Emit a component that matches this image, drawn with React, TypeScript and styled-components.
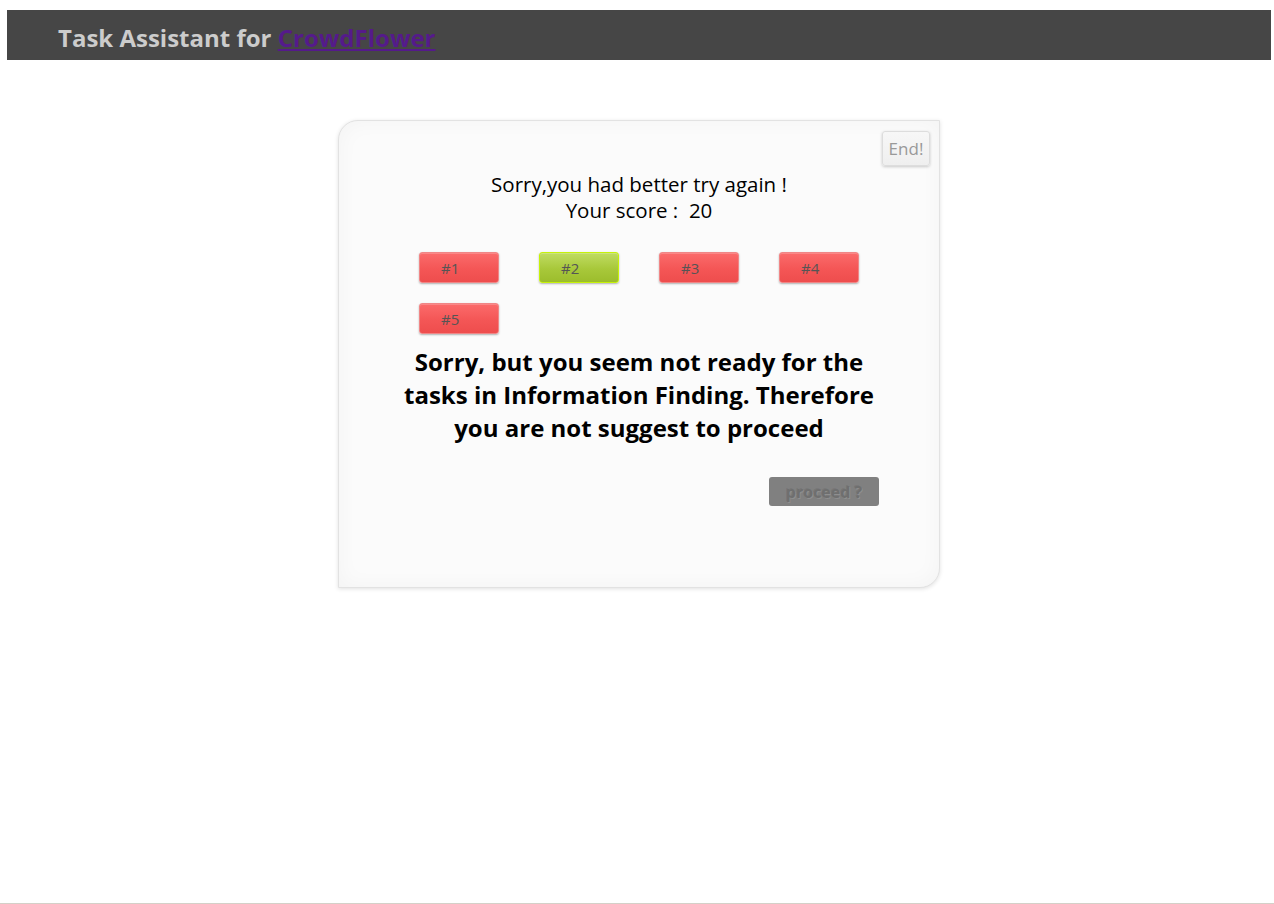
import React from "react";
import styled, { createGlobalStyle } from "styled-components";

const GlobalStyle = createGlobalStyle`
  html, body { margin: 0; padding: 0; background: #ffffff; }
  body { font-family: "Open Sans", "Noto Sans", sans-serif; }
`;

const Page = styled.div`
  min-height: 904px;
  box-sizing: border-box;
  display: flex;
  flex-direction: column;
  padding: 10px 3px 0 7px;
`;

const Header = styled.header`
  height: 50px;
  background: #464646;
  display: flex;
  align-items: center;
  padding-left: 51px;
  box-sizing: border-box;
`;

const Brand = styled.h1`
  margin: 0;
  font-size: 24px;
  font-weight: 700;
  color: #cccccc;
  letter-spacing: 0;
  position: relative;
  top: 2px;
`;

const BrandLink = styled.a`
  color: #551a8b;
  text-decoration: underline;
`;

const Main = styled.main`
  flex: 1;
  display: flex;
  justify-content: center;
  align-items: flex-start;
  padding-top: 60px;
`;

const Card = styled.section`
  width: 602px;
  height: 468px;
  box-sizing: border-box;
  background: #fbfbfb;
  border: 1px solid #e2e2e2;
  border-radius: 20px 0 20px 0;
  box-shadow: inset 0 0 22px rgba(0, 0, 0, 0.035), 0 1px 4px rgba(0, 0, 0, 0.12);
  padding: 10px 9px 0 9px;
  display: flex;
  flex-direction: column;
`;

const TopBar = styled.div`
  display: flex;
  justify-content: flex-end;
`;

const EndButton = styled.button`
  width: 48px;
  height: 35px;
  padding: 0;
  background: linear-gradient(#f7f7f7, #efefef);
  border: 1px solid #dddddd;
  border-radius: 3px;
  box-shadow: 0 1px 3px rgba(0, 0, 0, 0.2);
  color: #999999;
  font-family: "Open Sans", "Noto Sans", sans-serif;
  font-size: 17px;
`;

const Content = styled.div`
  width: 480px;
  align-self: center;
  display: flex;
  flex-direction: column;
`;

const Result = styled.p`
  margin: 5px 0 0;
  text-align: center;
  font-size: 20.5px;
  line-height: 26px;
  color: #000000;
`;

const TaskGrid = styled.div`
  display: flex;
  flex-wrap: wrap;
  gap: 20px 40px;
  width: 440px;
  margin: 29px 0 0 20px;
`;

const TaskButton = styled.button<{ $ok?: boolean }>`
  width: 80px;
  height: 31px;
  box-sizing: border-box;
  padding: 0 0 0 21px;
  text-align: left;
  border-radius: 3px;
  font-family: "Open Sans", "Noto Sans", sans-serif;
  font-size: 15px;
  color: #555555;
  border: 1px solid ${(p) => (p.$ok ? "#c6f20a" : "#f08686")};
  background: ${(p) =>
    p.$ok
      ? "linear-gradient(#c0dc62, #a8c83a 55%, #9cbd2c)"
      : "linear-gradient(#fb6b6b, #f45656 55%, #ee4d4d)"};
  box-shadow: 0 1px 2px rgba(0, 0, 0, 0.3), inset 0 1px 0 rgba(255, 255, 255, 0.2);
`;

const Verdict = styled.h2`
  margin: 11px 0 0;
  text-align: center;
  font-size: 24px;
  line-height: 33px;
  font-weight: 700;
  color: #000000;
`;

const Actions = styled.div`
  display: flex;
  justify-content: flex-end;
  margin-top: 33px;
`;

const ProceedButton = styled.button`
  width: 110px;
  height: 29px;
  padding: 0;
  border: none;
  border-radius: 3px;
  background: #808080;
  color: #6f6f6f;
  font-family: "Open Sans", "Noto Sans", sans-serif;
  font-size: 16px;
  font-weight: 700;
  text-shadow: 1px 1px 0 rgba(255, 255, 255, 0.12), -1px -1px 0 rgba(0, 0, 0, 0.08);
`;

const Footer = styled.div`
  height: 1px;
  background: #d4d0c8;
  margin: 0 -3px 0 -7px;
`;

const tasks = [
  { label: "#1", ok: false },
  { label: "#2", ok: true },
  { label: "#3", ok: false },
  { label: "#4", ok: false },
  { label: "#5", ok: false },
];

export default function App() {
  return (
    <>
      <GlobalStyle />
      <Page>
        <Header>
          <Brand>
            Task Assistant for <BrandLink href="#">CrowdFlower</BrandLink>
          </Brand>
        </Header>
        <Main>
          <Card>
            <TopBar>
              <EndButton>End!</EndButton>
            </TopBar>
            <Content>
              <Result>
                Sorry,you had better try again !
                <br />
                Your score :&nbsp; 20
              </Result>
              <TaskGrid>
                {tasks.map((t) => (
                  <TaskButton key={t.label} $ok={t.ok}>
                    {t.label}
                  </TaskButton>
                ))}
              </TaskGrid>
              <Verdict>
                Sorry, but you seem not ready for the tasks in Information Finding. Therefore you are not suggest to proceed
              </Verdict>
              <Actions>
                <ProceedButton>proceed ?</ProceedButton>
              </Actions>
            </Content>
          </Card>
        </Main>
        <Footer />
      </Page>
    </>
  );
}
